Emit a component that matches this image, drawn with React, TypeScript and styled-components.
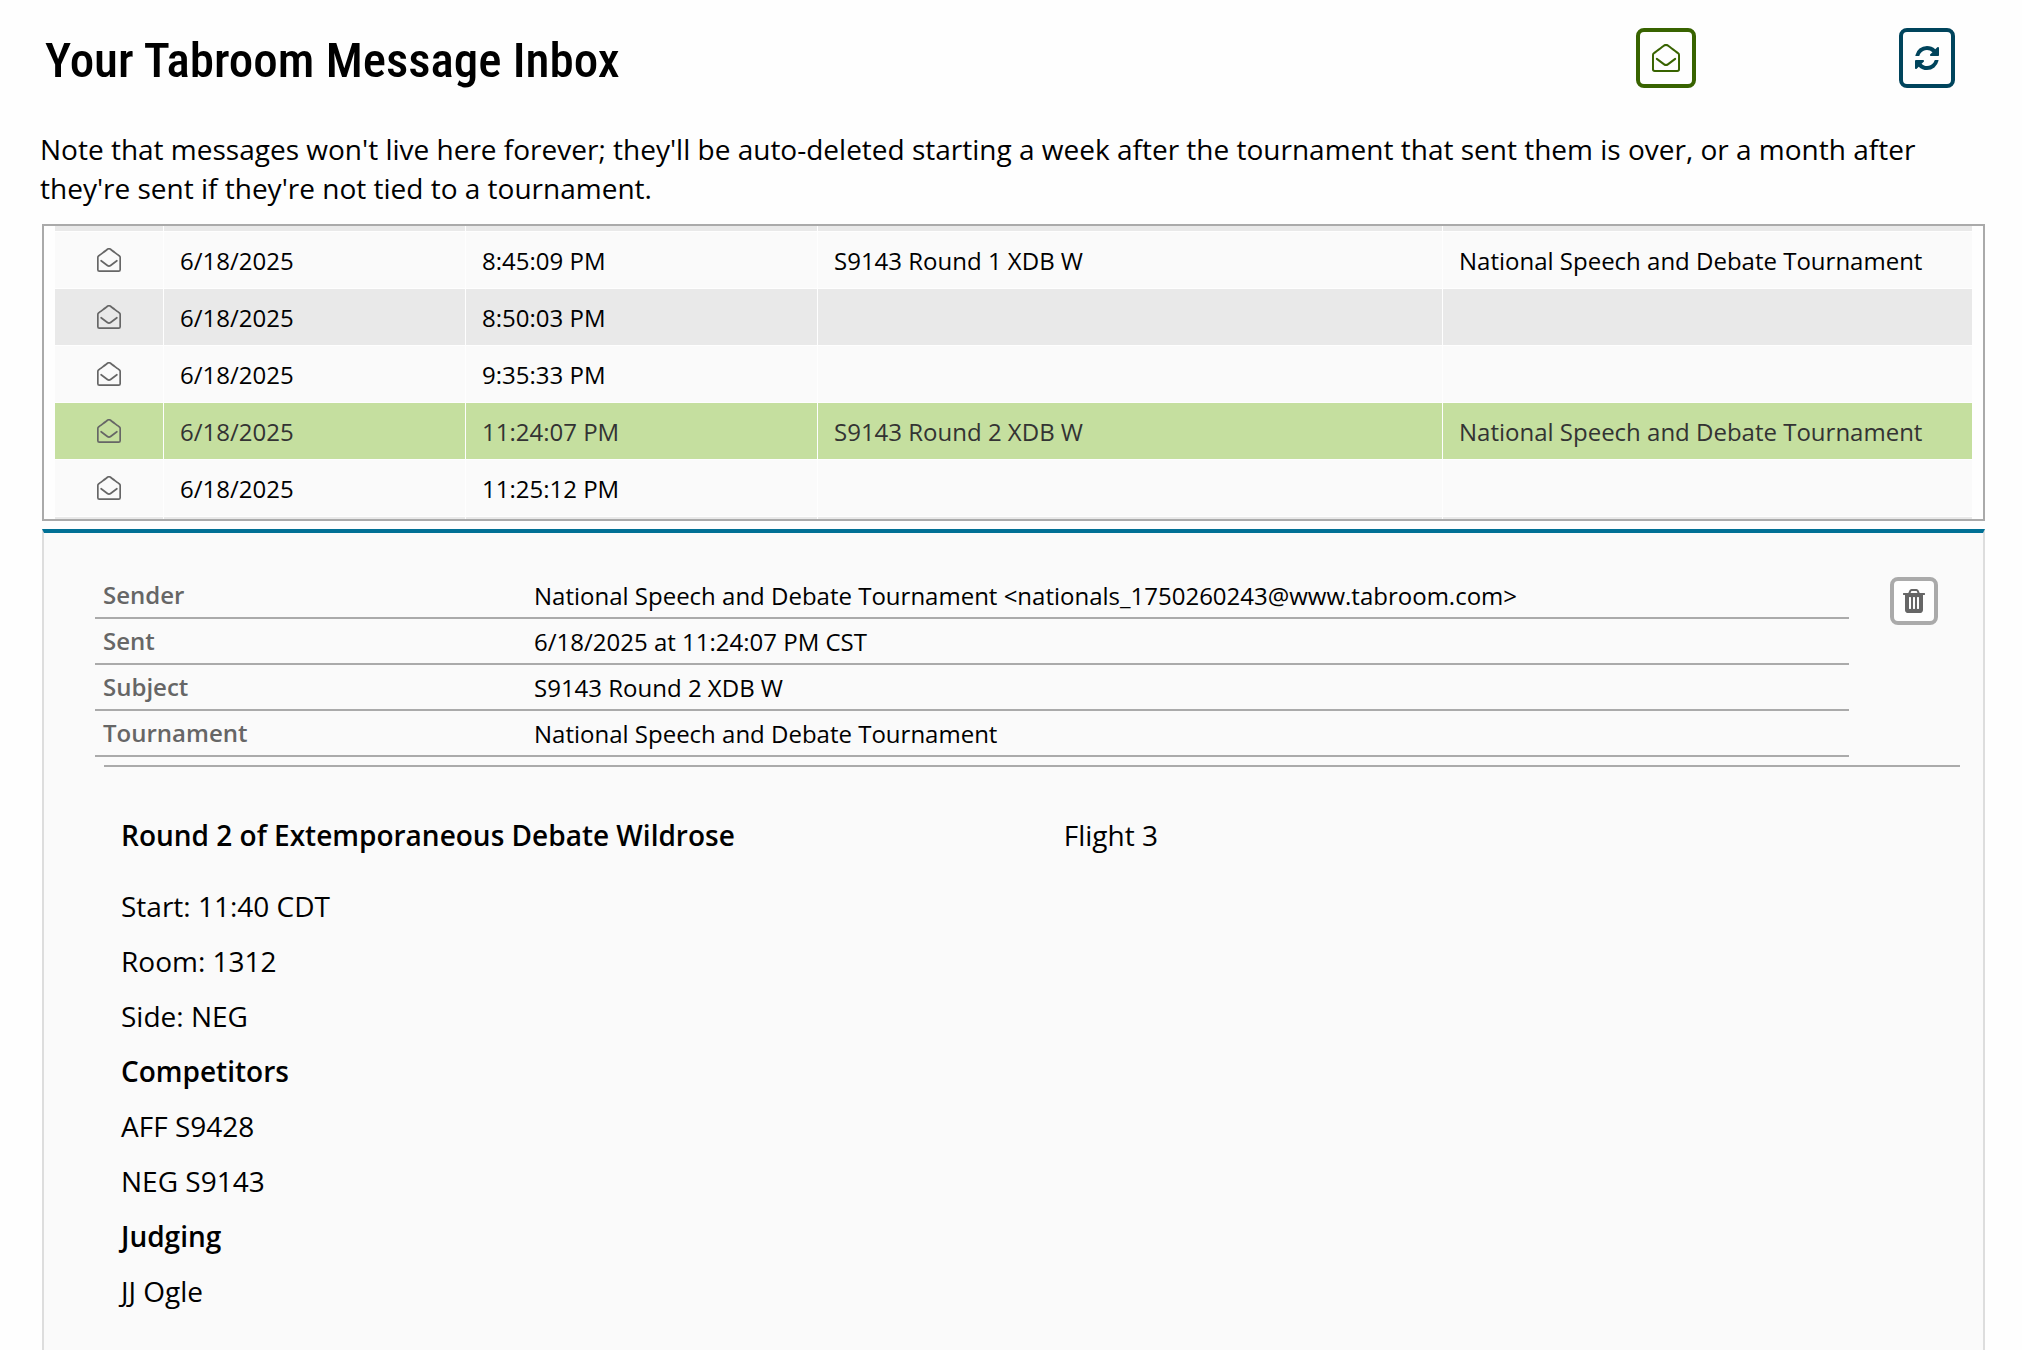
import React, { useLayoutEffect, useRef } from "react";
import styled, { createGlobalStyle, css } from "styled-components";

const Global = createGlobalStyle`
  *, *::before, *::after { box-sizing: border-box; }
  body {
    margin: 0;
    background: #fefefe;
    color: #000;
    font-family: "Open Sans", "Noto Sans", sans-serif;
    font-size: 28px;
    line-height: 39px;
  }
`;

const Page = styled.main`
  display: flex;
  flex-direction: column;
  min-height: 100vh;
  padding: 28px 37px 0 40px;
`;

const Header = styled.header`
  display: flex;
  align-items: flex-start;
  justify-content: space-between;
  height: 102px;
  padding: 0 30px 0 5px;
`;

const Title = styled.h1`
  margin: 0;
  font-family: "Roboto Condensed", "Open Sans Condensed", "Open Sans", sans-serif;
  font-size: 49px;
  font-weight: 500;
  line-height: 66px;
`;

const Actions = styled.div`
  display: flex;
  gap: 203px;
`;

const tones = {
  green: { line: "#386300", icon: "#386300" },
  blue: { line: "#00445c", icon: "#00445c" },
  gray: { line: "#aaaaaa", icon: "#666666" },
};

const IconButton = styled.button<{ $tone: keyof typeof tones; $w: number; $h: number }>`
  display: flex;
  flex: none;
  align-items: center;
  justify-content: center;
  width: ${(p) => p.$w}px;
  height: ${(p) => p.$h}px;
  padding: 0;
  border: 4px solid ${(p) => tones[p.$tone].line};
  border-radius: 8px;
  background: #fefefe;
  color: ${(p) => tones[p.$tone].icon};
  cursor: pointer;
`;

const Note = styled.p`
  margin: 0 0 16px;
`;

const ListBox = styled.div`
  height: 297px;
  margin-left: 2px;
  padding: 0 11px;
  border: 2px solid #aaa;
  overflow-y: auto;
  scrollbar-width: none;
`;

const MessageTable = styled.table`
  width: 100%;
  table-layout: fixed;
  border-collapse: separate;
  border-spacing: 0;
  font-size: 24px;
  line-height: 34px;
`;

const Col = styled.col<{ $w?: number }>`
  width: ${(p) => (p.$w ? `${p.$w}px` : "auto")};
`;

const Row = styled.tr<{ $selected?: boolean }>`
  height: 57px;
  background: #fafafa;
  cursor: pointer;

  &:nth-child(odd) {
    background: #e9e9e9;
  }
  ${(p) =>
    p.$selected &&
    css`
      &&& {
        background: #c5df9f;
        color: #333;
      }
    `}
`;

const Cell = styled.td<{ $icon?: boolean }>`
  padding: 2px 16px 0;
  border-right: 1px solid #fefefe;
  border-bottom: 1px solid #fefefe;
  white-space: nowrap;

  &:last-child {
    border-right: 0;
  }
  ${(p) =>
    p.$icon &&
    css`
      padding: 0;
      color: #666;
    `}

  svg {
    display: block;
    margin: 0 auto;
  }
`;

const Panel = styled.section`
  flex: 1;
  margin: 8px 0 0 2px;
  padding: 40px 23px 24px 51px;
  border: solid #ddd;
  border-width: 4px 2px 0;
  border-top-color: #007095;
  background: #fafafa;
`;

const Summary = styled.div`
  display: flex;
  justify-content: space-between;
  padding-right: 22px;
`;

const Fields = styled.dl`
  flex: 1;
  margin: 0 41px 0 0;
  font-size: 24px;
  line-height: 44px;
`;

const Field = styled.div`
  display: grid;
  grid-template-columns: 431px 1fr;
  padding-left: 8px;
  border-bottom: 2px solid #aaa;
`;

const Label = styled.dt`
  color: #666;
  font-weight: 600;
`;

const Value = styled.dd`
  margin: 0;
  padding-top: 2px;
  line-height: 42px;
`;

const DeleteSlot = styled.div`
  padding-top: 4px;
`;

const Rule = styled.hr`
  margin: 8px 0 0 9px;
  border: 0;
  border-top: 2px solid #aaa;
`;

const Body = styled.div`
  padding: 41px 26px 0;
  line-height: 55px;
`;

const BodyHead = styled.div`
  display: grid;
  grid-template-columns: 52% 1fr;
  margin-bottom: 16px;
`;

const BodyTitle = styled.h2`
  margin: 0;
  font-size: 28px;
  font-weight: 600;
`;

const Line = styled.p<{ $strong?: boolean }>`
  margin: 0;
  font-weight: ${(p) => (p.$strong ? 600 : 400)};
`;

const EnvelopeOpen = ({ size }: { size: number }) => (
  <svg
    width={size}
    height={size}
    viewBox="0 0 512 512"
    fill="none"
    stroke="currentColor"
    strokeWidth="36"
    strokeLinecap="round"
    strokeLinejoin="round"
    aria-hidden="true"
  >
    <path d="M18 200v262a32 32 0 0 0 32 32h412a32 32 0 0 0 32-32V200c0-12-5-22-14-29C450 146 330 60 296 32c-25-20-55-20-80 0C182 60 62 146 32 171c-9 7-14 17-14 29z" />
    <path d="M88 272c45 34 90 68 134 101 20 15 48 15 68 0 44-33 89-67 134-101" />
  </svg>
);

const Refresh = () => (
  <svg width="24" height="24" viewBox="0 0 1536 1536" fill="currentColor" aria-hidden="true">
    <path d="M1511 928q0 5-1 7-64 268-268 434.500t-478 166.500q-146 0-282.500-55t-243.500-157l-129 129q-19 19-45 19t-45-19-19-45v-448q0-26 19-45t45-19h448q26 0 45 19t19 45-19 45l-137 137q71 66 161 102t187 36q134 0 250-65t186-179q11-17 53-117 8-23 30-23h192q13 0 22.500 9.500t9.500 22.500zm25-800v448q0 26-19 45t-45 19h-448q-26 0-45-19t-19-45 19-45l138-138q-148-137-349-137-134 0-250 65t-186 179q-11 17-53 117-8 23-30 23h-199q-13 0-22.500-9.500t-9.500-22.500v-7q65-268 270-434.500t480-166.500q146 0 284 55.500t245 156.500l130-129q19-19 45-19t45 19 19 45z" />
  </svg>
);

const Trash = () => (
  <svg width="22" height="24" viewBox="192 128 1408 1536" fill="currentColor" aria-hidden="true">
    <path d="M704 1376v-704q0-14-9-23t-23-9h-64q-14 0-23 9t-9 23v704q0 14 9 23t23 9h64q14 0 23-9t9-23zm256 0v-704q0-14-9-23t-23-9h-64q-14 0-23 9t-9 23v704q0 14 9 23t23 9h64q14 0 23-9t9-23zm256 0v-704q0-14-9-23t-23-9h-64q-14 0-23 9t-9 23v704q0 14 9 23t23 9h64q14 0 23-9t9-23zm-544-992h448l-48-117q-7-9-17-11h-317q-10 2-17 11zm928 32v64q0 14-9 23t-23 9h-96v948q0 83-47 143.500t-113 60.500h-832q-66 0-113-58.500t-47-141.500v-952h-96q-14 0-23-9t-9-23v-64q0-14 9-23t23-9h309l70-167q15-37 54-63t79-26h320q40 0 79 26t54 63l70 167h309q14 0 23 9t9 23z" />
  </svg>
);

type Message = { date?: string; time?: string; subject?: string; tourn?: string; selected?: boolean };

const TOURNAMENT = "National Speech and Debate Tournament";

const messages: Message[] = [
  {},
  { date: "6/18/2025", time: "8:45:09 PM", subject: "S9143 Round 1 XDB W", tourn: TOURNAMENT },
  { date: "6/18/2025", time: "8:50:03 PM" },
  { date: "6/18/2025", time: "9:35:33 PM" },
  { date: "6/18/2025", time: "11:24:07 PM", subject: "S9143 Round 2 XDB W", tourn: TOURNAMENT, selected: true },
  { date: "6/18/2025", time: "11:25:12 PM" },
  {},
];

const fields = [
  ["Sender", `${TOURNAMENT} <nationals_1750260243@www.tabroom.com>`],
  ["Sent", "6/18/2025 at 11:24:07 PM CST"],
  ["Subject", "S9143 Round 2 XDB W"],
  ["Tournament", TOURNAMENT],
];

const lines = [
  { text: "Start: 11:40 CDT" },
  { text: "Room: 1312" },
  { text: "Side: NEG" },
  { text: "Competitors", strong: true },
  { text: "AFF S9428" },
  { text: "NEG S9143" },
  { text: "Judging", strong: true },
  { text: "JJ Ogle" },
];

export default function App() {
  const list = useRef<HTMLDivElement>(null);

  useLayoutEffect(() => {
    if (list.current) list.current.scrollTop = 51;
  }, []);

  return (
    <>
      <Global />
      <Page>
        <Header>
          <Title>Your Tabroom Message Inbox</Title>
          <Actions>
            <IconButton type="button" aria-label="Mark all read" $tone="green" $w={60} $h={60}>
              <EnvelopeOpen size={28} />
            </IconButton>
            <IconButton type="button" aria-label="Refresh" $tone="blue" $w={56} $h={60}>
              <Refresh />
            </IconButton>
          </Actions>
        </Header>
        <Note>
          Note that messages won't live here forever; they'll be auto-deleted starting a week after the tournament that
          sent them is over, or a month after they're sent if they're not tied to a tournament.
        </Note>
        <ListBox ref={list}>
          <MessageTable>
            <colgroup>
              <Col $w={109} />
              <Col $w={302} />
              <Col $w={352} />
              <Col />
              <Col $w={529} />
            </colgroup>
            <tbody>
              {messages.map((m, i) => (
                <Row key={i} $selected={m.selected}>
                  <Cell $icon>{m.date && <EnvelopeOpen size={24} />}</Cell>
                  <Cell>{m.date}</Cell>
                  <Cell>{m.time}</Cell>
                  <Cell>{m.subject}</Cell>
                  <Cell>{m.tourn}</Cell>
                </Row>
              ))}
            </tbody>
          </MessageTable>
        </ListBox>
        <Panel>
          <Summary>
            <Fields>
              {fields.map(([label, value]) => (
                <Field key={label}>
                  <Label>{label}</Label>
                  <Value>{value}</Value>
                </Field>
              ))}
            </Fields>
            <DeleteSlot>
              <IconButton type="button" aria-label="Delete message" $tone="gray" $w={48} $h={48}>
                <Trash />
              </IconButton>
            </DeleteSlot>
          </Summary>
          <Rule />
          <Body>
            <BodyHead>
              <BodyTitle>Round 2 of Extemporaneous Debate Wildrose</BodyTitle>
              <Line>Flight 3</Line>
            </BodyHead>
            {lines.map((l) => (
              <Line key={l.text} $strong={l.strong}>
                {l.text}
              </Line>
            ))}
          </Body>
        </Panel>
      </Page>
    </>
  );
}
